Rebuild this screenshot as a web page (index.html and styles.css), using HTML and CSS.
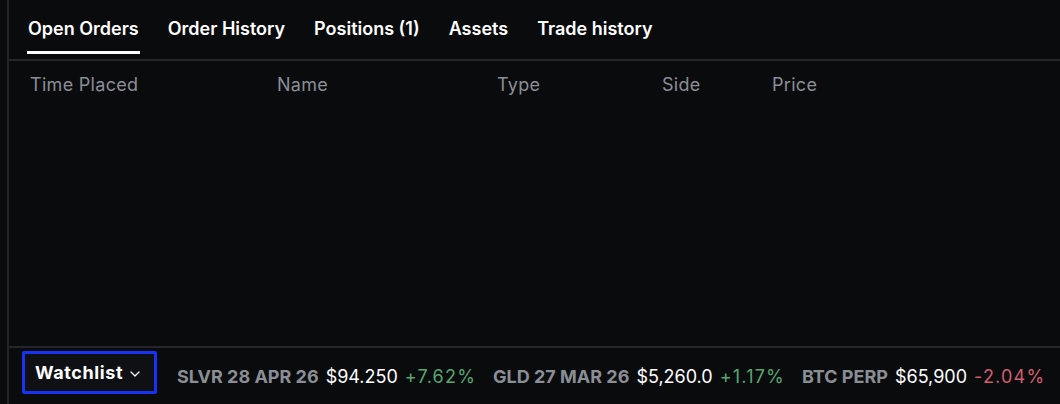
FILE: index.html
```html
<!DOCTYPE html>
<html>
<head>
<meta charset="utf-8">
<link rel="stylesheet" href="styles.css">
</head>
<body>
<div class="app">
  <div class="rail"></div>
  <div class="main">
    <nav class="tabs">
      <div class="tab active">Open Orders</div>
      <div class="tab">Order History</div>
      <div class="tab">Positions (1)</div>
      <div class="tab">Assets</div>
      <div class="tab">Trade history</div>
    </nav>
    <div class="table-head">
      <div class="col c-time">Time Placed</div>
      <div class="col c-name">Name</div>
      <div class="col c-type">Type</div>
      <div class="col c-side">Side</div>
      <div class="col c-price">Price</div>
    </div>
    <div class="table-body"></div>
    <footer class="ticker-bar">
      <button class="watch-btn">Watchlist
        <svg class="chev" width="10" height="6" viewBox="0 0 10 6"><path d="M1 1l4 4 4-4" fill="none" stroke="#fff" stroke-width="1.3" stroke-linecap="round" stroke-linejoin="round"/></svg>
      </button>
      <div class="ticker">
        <span class="sym">SLVR 28 APR 26</span><span class="px">$94.250</span><span class="chg up">+7.62%</span>
      </div>
      <div class="ticker">
        <span class="sym">GLD 27 MAR 26</span><span class="px">$5,260.0</span><span class="chg up">+1.17%</span>
      </div>
      <div class="ticker">
        <span class="sym">BTC PERP</span><span class="px">$65,900</span><span class="chg down">-2.04%</span>
      </div>
    </footer>
  </div>
</div>
</body>
</html>
```
FILE: styles.css
```css
* { box-sizing: border-box; }
html, body { margin: 0; padding: 0; }
body {
  background: #0a0b0d;
  font-family: Inter, "Noto Sans", sans-serif;
  color: #fff;
  width: 1060px;
  height: 404px;
  overflow: hidden;
}
.app { display: flex; height: 404px; }
.rail { width: 9px; border-right: 2px solid #232428; flex: none; }
.main { flex: 1; display: flex; flex-direction: column; min-width: 0; }
.tabs {
  display: flex;
  gap: 27px;
  padding: 0 0 0 18px;
  height: 61px;
  border-bottom: 2px solid #25262a;
  align-items: flex-start;
}
.tab {
  font-size: 18px;
  font-weight: 600;
  letter-spacing: 0;
  color: #fff;
  height: 54px;
  padding: 18px 1px 0;
  border-bottom: 3px solid transparent;
}
.tab.active { border-bottom-color: #fff; }
.table-head {
  display: flex;
  height: 46px;
  align-items: center;
  padding: 0 0 0 21px;
  font-size: 18px;
  letter-spacing: 0.3px;
  color: #8a8e95;
}
.col { flex: none; }
.c-time { width: 247px; }
.c-name { width: 220px; }
.c-type { width: 165px; }
.c-side { width: 110px; }
.table-body { flex: 1; }
.ticker-bar {
  height: 58px;
  border-top: 2px solid #25262a;
  display: flex;
  align-items: flex-start;
  padding: 3px 0 0 13px;
  font-size: 18px;
  white-space: nowrap;
}
.watch-btn {
  flex: none;
  display: flex;
  align-items: center;
  gap: 7px;
  height: 43px;
  width: 135px;
  padding: 0 0 0 10px;
  background: #0f1013;
  border: 3px solid #1532f5;
  border-radius: 2px;
  color: #fff;
  font-family: inherit;
  font-size: 18px;
  font-weight: 700;
  letter-spacing: 0.6px;
  margin-right: 20px;
}
.chev { margin-top: 3px; }
.ticker {
  flex: none;
  display: flex;
  gap: 7px;
  margin-right: 17px;
  height: 43px;
  align-items: center;
  padding-top: 8px;
}
.sym { color: #8a8e95; font-weight: 700; }
.px { color: #fff; }
.chg { letter-spacing: 1.2px; }
.chg.up { color: #5aa56f; }
.chg.down { color: #cf5f6c; }
```
